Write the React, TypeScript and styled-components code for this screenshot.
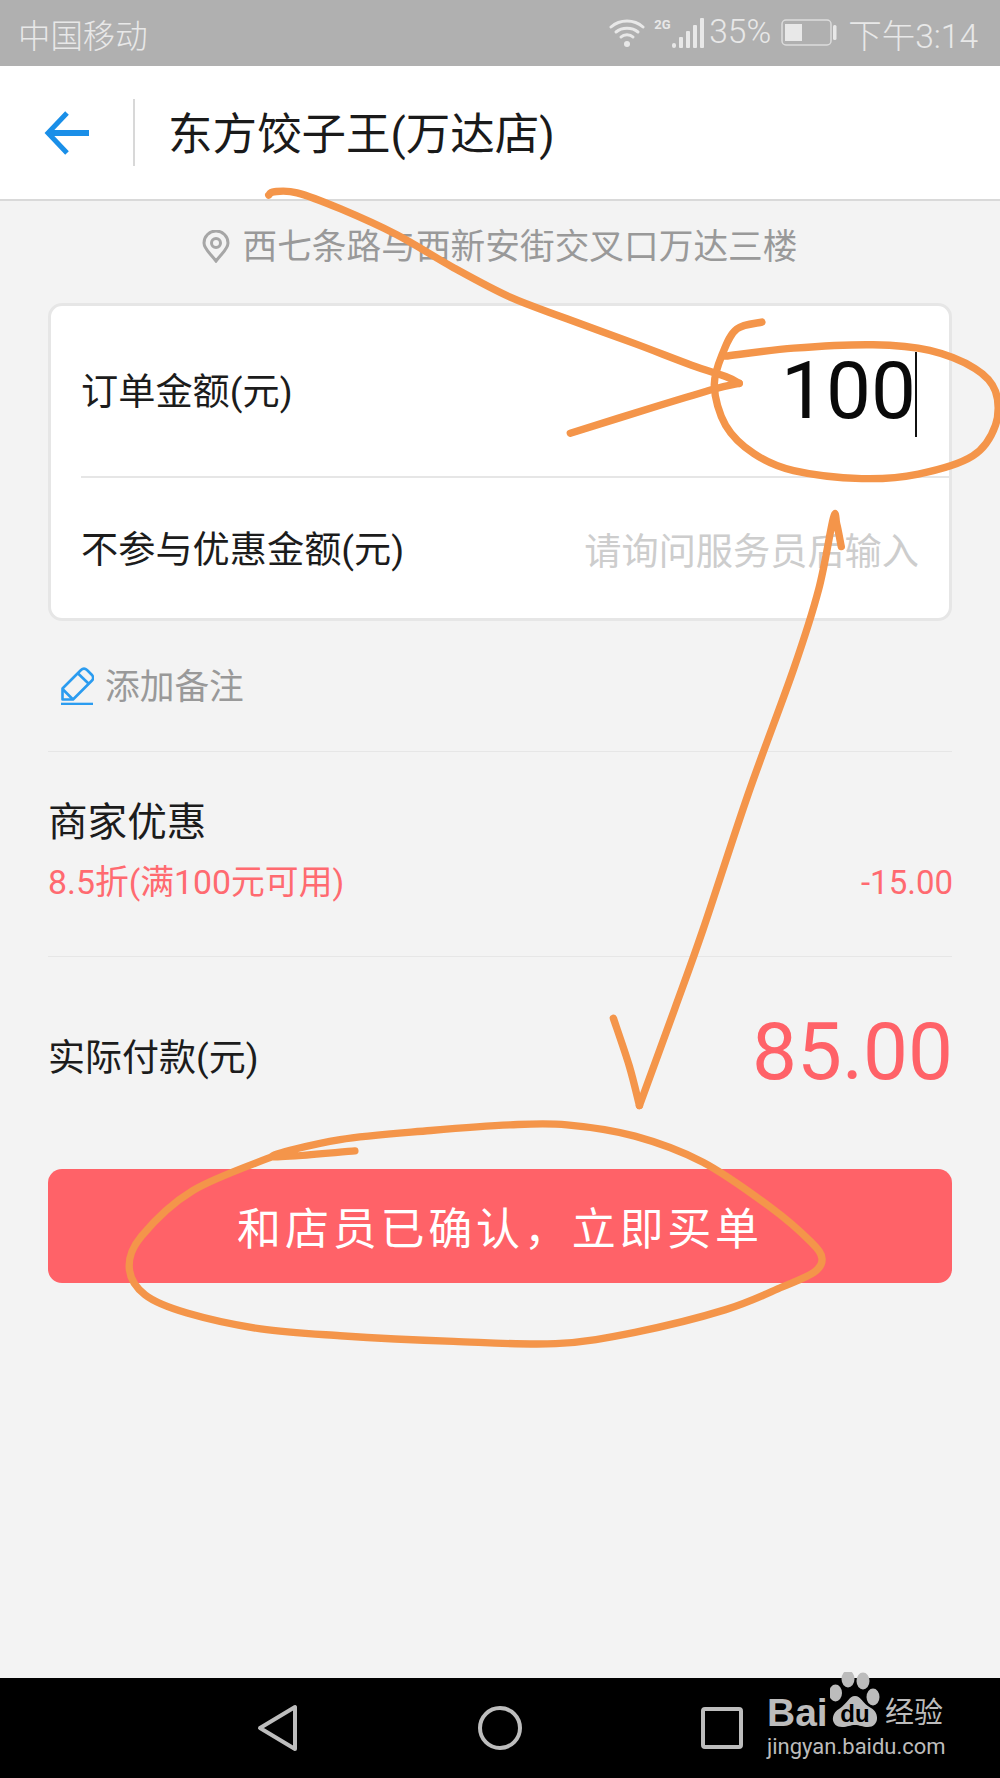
import React from "react";
import styled, { createGlobalStyle } from "styled-components";

const Global = createGlobalStyle`
  html, body { margin: 0; padding: 0; background: #f2f2f2; }
  * { box-sizing: border-box; }
`;

const Page = styled.div`
  position: relative;
  width: 1000px;
  height: 1778px;
  display: flex;
  flex-direction: column;
  overflow: hidden;
  background: #f3f3f3;
  font-family: Roboto, "Noto Sans CJK SC", sans-serif;
  color: #1c1c1c;
`;

const StatusBar = styled.div`
  height: 66px;
  flex: none;
  background: #b0b0b0;
  color: #e8e8e8;
  font-size: 33.5px;
  display: flex;
  align-items: center;
  justify-content: space-between;
  padding: 0 22px 0 18px;
  font-weight: 300;
`;

const Carrier = styled.span`
  font-size: 32.4px;
`;

const StatusRight = styled.div`
  display: flex;
  align-items: center;
`;

const Net = styled.span`
  font-size: 13px;
  font-weight: 700;
  margin: -18px 0 0 9px;
  width: 18px;
`;

const Percent = styled.span`
  margin-left: 5px;
  margin-top: -3px;
`;

const Clock = styled.span`
  margin-left: 11px;
`;

const Header = styled.header`
  height: 135px;
  flex: none;
  background: #fff;
  border-bottom: 2px solid #d9d9d9;
  display: flex;
  align-items: center;
  padding-left: 44px;
`;

const Separator = styled.div`
  width: 2px;
  height: 67px;
  background: #d8d8d8;
  margin: 0 33px 0 43px;
`;

const Title = styled.h1`
  margin: 4px 0 0 0;
  font-size: 44.5px;
  font-weight: 400;
  line-height: 60px;
  color: #1a1a1a;
`;

const Address = styled.div`
  height: 102px;
  flex: none;
  display: flex;
  align-items: center;
  justify-content: center;
  gap: 12px;
  padding-bottom: 12px;
  font-size: 34.7px;
  color: #999;
`;

const AddressText = styled.span`
  margin-bottom: 4px;
`;

const Card = styled.section`
  margin: 0 48px;
  height: 318px;
  flex: none;
  background: #fff;
  border: 3px solid #e6e6e6;
  border-radius: 14px;
  display: flex;
  flex-direction: column;
`;

const CardRow = styled.div<{ $first?: boolean }>`
  flex: ${(p) => (p.$first ? "0 0 172px" : "1")};
  margin-left: 30px;
  padding-right: 30px;
  display: flex;
  align-items: center;
  justify-content: space-between;
  font-size: 37.2px;
  border-bottom: ${(p) => (p.$first ? "2px solid #e6e6e6" : "none")};
`;

const RowLabel = styled.span<{ $lift: number }>`
  margin-bottom: ${(p) => p.$lift}px;
`;

const AmountWrap = styled.div`
  display: flex;
  align-items: center;
  margin-right: 2px;
`;

const Amount = styled.span`
  font-size: 80px;
  line-height: 86px;
  color: #0a0a0a;
  margin-top: -1px;
`;

const Cursor = styled.span`
  width: 2px;
  height: 85px;
  background: #111;
  margin: 6px 0 0 -1px;
`;

const Placeholder = styled.span`
  color: #cdcdcd;
  margin-top: 2px;
`;

const Note = styled.div`
  height: 130px;
  flex: none;
  margin-left: 61px;
  display: flex;
  align-items: center;
  gap: 11px;
  font-size: 34.7px;
  color: #999;
`;

const NoteText = styled.span`
  margin-bottom: 4px;
`;

const Offer = styled.section`
  margin: 0 48px;
  height: 206px;
  flex: none;
  border-top: 1px solid #e6e6e6;
  border-bottom: 1px solid #e6e6e6;
  padding-top: 46px;
`;

const OfferTitle = styled.div`
  font-size: 39.6px;
  line-height: 50px;
`;

const OfferLine = styled.div`
  margin-top: 15px;
  margin-right: -1px;
  display: flex;
  justify-content: space-between;
  font-size: 33px;
  line-height: 40px;
  color: #ff6a70;
`;

const OfferRule = styled.span`
  font-size: 33.8px;
`;

const Pay = styled.div`
  margin: 0 48px;
  height: 212px;
  flex: none;
  display: flex;
  align-items: center;
  justify-content: space-between;
  padding-bottom: 16px;
  font-size: 37px;
`;

const Price = styled.span`
  font-size: 80px;
  line-height: 90px;
  color: #ff6268;
  margin-bottom: 7px;
  margin-right: -1px;
`;

const PayButton = styled.button`
  margin: 0 48px;
  height: 114px;
  flex: none;
  border: 0;
  border-radius: 14px;
  background: #ff6268;
  color: #fff;
  font-family: inherit;
  font-size: 44px;
  letter-spacing: 3.8px;
  padding: 0;
`;

const Spacer = styled.div`
  flex: 1;
`;

const NavBar = styled.nav`
  height: 100px;
  flex: none;
  background: #000;
  display: flex;
  align-items: center;
  gap: 178px;
  padding-left: 256px;
`;

const Watermark = styled.div`
  position: absolute;
  left: 767px;
  top: 1672px;
  width: 182px;
  color: #bcbcbc;
  display: flex;
  flex-direction: column;
`;

const MarkTop = styled.div`
  display: flex;
  align-items: flex-end;
  height: 60px;
`;

const MarkBai = styled.span`
  font-family: "Liberation Sans", sans-serif;
  font-weight: 700;
  font-size: 39px;
  line-height: 42px;
  margin-bottom: -2px;
  width: 63px;
`;

const MarkJing = styled.span`
  font-size: 29px;
  line-height: 36px;
  margin: 0 0 1px 3px;
  white-space: nowrap;
`;

const MarkUrl = styled.span`
  font-size: 22px;
  line-height: 26px;
  margin-top: 2px;
  white-space: nowrap;
`;

const Overlay = styled.svg`
  position: absolute;
  left: 0;
  top: 0;
  width: 1000px;
  height: 1778px;
  pointer-events: none;
`;

type P = [number, number];

const smooth = (pts: P[]) => {
  let d = `M${pts[0][0]} ${pts[0][1]}`;
  for (let i = 0; i < pts.length - 1; i++) {
    const p0 = pts[Math.max(i - 1, 0)];
    const p1 = pts[i];
    const p2 = pts[i + 1];
    const p3 = pts[Math.min(i + 2, pts.length - 1)];
    const c1x = p1[0] + (p2[0] - p0[0]) / 6;
    const c1y = p1[1] + (p2[1] - p0[1]) / 6;
    const c2x = p2[0] - (p3[0] - p1[0]) / 6;
    const c2y = p2[1] - (p3[1] - p1[1]) / 6;
    d += ` C${c1x} ${c1y} ${c2x} ${c2y} ${p2[0]} ${p2[1]}`;
  }
  return d;
};

const strokes: P[][] = [
  [[237, 172], [242, 169], [262, 170], [300, 184], [350, 207], [400, 236], [450, 262], [500, 281], [560, 303], [610, 322], [640, 332], [652, 338]],
  [[652, 338], [630, 343], [580, 358], [503, 382]],
  [[672, 284], [650, 290], [638, 310], [630, 340], [640, 375], [665, 400], [700, 415], [760, 422], [810, 418], [858, 402], [878, 375], [878, 345], [860, 325], [820, 309], [770, 304], [700, 307], [640, 314]],
  [[742, 482], [738, 462], [735, 457], [722, 520], [700, 590], [660, 700], [620, 820], [595, 890], [564, 975]],
  [[564, 975], [555, 940], [541, 898]],
  [[313, 1015], [240, 1020], [300, 1005], [380, 997], [450, 992], [500, 992], [560, 1002], [620, 1025], [680, 1065], [715, 1095], [725, 1110], [718, 1122], [690, 1135], [640, 1155], [560, 1175], [490, 1185], [400, 1183], [300, 1178], [230, 1172], [165, 1158], [128, 1142], [114, 1118], [125, 1090], [170, 1050], [240, 1020]],
];

const Wifi = () => (
  <svg width="36" height="30" viewBox="0 0 36 30" fill="none" stroke="#e8e8e8" strokeWidth="3" strokeLinecap="round">
    <path d="M2 9C11 1 25 1 34 9" />
    <path d="M7 14C13 9 23 9 29 14" />
    <path d="M12 19C15 16 21 16 24 19" />
    <circle cx="18" cy="26" r="3" fill="#e8e8e8" stroke="none" />
  </svg>
);

const Signal = () => (
  <svg width="32" height="30" viewBox="0 0 32 30" fill="#e8e8e8">
    <rect x="0" y="25" width="4" height="5" rx="2" />
    <rect x="7" y="19" width="4" height="11" rx="1" />
    <rect x="14" y="13" width="4" height="17" rx="1" />
    <rect x="21" y="7" width="4" height="23" rx="1" />
    <rect x="28" y="0" width="4" height="30" rx="1" />
  </svg>
);

const BatteryIcon = styled.svg`
  margin-left: 10px;
`;

const Battery = () => (
  <BatteryIcon width="56" height="28" viewBox="0 0 56 28" fill="none">
    <rect x="1" y="1" width="49" height="25" rx="4" stroke="#dcdcdc" strokeWidth="1.5" />
    <rect x="4" y="5" width="17" height="17" fill="#e8e8e8" />
    <rect x="52" y="6" width="3.5" height="15" rx="1.5" fill="#e8e8e8" />
  </BatteryIcon>
);

const BackArrow = () => (
  <svg width="46" height="44" viewBox="0 0 46 44" fill="none" stroke="#1a8fe8" strokeWidth="5">
    <path d="M23 2L4 22L23 42" />
    <path d="M5 22H45" strokeWidth="6" />
  </svg>
);

const Pin = () => (
  <svg width="28" height="33" viewBox="0 0 28 33" fill="none" stroke="#a6a6a6" strokeWidth="3">
    <path d="M14 31C8 23 2 19 2 13a12 12 0 0 1 24 0C26 19 20 23 14 31Z" />
    <circle cx="14" cy="13" r="4.5" />
  </svg>
);

const Pencil = () => (
  <svg width="33" height="38" viewBox="0 0 33 38" fill="none" stroke="#2b9cf0" strokeWidth="2.6" strokeLinejoin="round">
    <path d="M1.5 32.5V21.5L20 3C22 1 24 1 26 3L31 8C32.5 10 32.5 12 31 13.5L12 32.5Z" />
    <path d="M16.5 6L28 17" />
    <path d="M2 22.5L11.5 32" />
    <path d="M0 37H32" strokeWidth="2.6" />
  </svg>
);

const NavBack = () => (
  <svg width="44" height="48" viewBox="0 0 44 48" fill="none" stroke="#bdbdbd" strokeWidth="4" strokeLinejoin="round">
    <path d="M39 3V45L4 24Z" />
  </svg>
);

const NavHome = () => (
  <svg width="44" height="48" viewBox="0 0 44 48" fill="none" stroke="#bdbdbd" strokeWidth="4">
    <circle cx="22" cy="24" r="20" />
  </svg>
);

const NavRecent = () => (
  <svg width="44" height="48" viewBox="0 0 44 48" fill="none" stroke="#bdbdbd" strokeWidth="4" strokeLinejoin="round">
    <rect x="3" y="5" width="38" height="38" rx="2" />
  </svg>
);

const Paw = () => (
  <svg width="52" height="60" viewBox="0 0 52 60" fill="#bcbcbc">
    <ellipse cx="18" cy="7" rx="6.5" ry="8.5" />
    <ellipse cx="33" cy="9" rx="6.5" ry="8.5" />
    <ellipse cx="5.5" cy="21" rx="6.5" ry="8.5" />
    <ellipse cx="43" cy="25" rx="6.5" ry="8.5" />
    <path d="M25 24C31 24 33 32 41 36C50 41 49 55 38 55C32 55 30 53 25 53C20 53 18 55 12 55C1 55 0 42 9 37C17 32 19 24 25 24Z" />
    <text x="25" y="50" textAnchor="middle" fontFamily="Liberation Sans, sans-serif" fontWeight="700" fontSize="24" fill="#000">du</text>
  </svg>
);

export default function App() {
  return (
    <Page>
      <Global />
      <StatusBar>
        <Carrier>中国移动</Carrier>
        <StatusRight>
          <Wifi />
          <Net>2G</Net>
          <Signal />
          <Percent>35%</Percent>
          <Battery />
          <Clock>下午3:14</Clock>
        </StatusRight>
      </StatusBar>
      <Header>
        <BackArrow />
        <Separator />
        <Title>东方饺子王(万达店)</Title>
      </Header>
      <Address>
        <Pin />
        <AddressText>西七条路与西新安街交叉口万达三楼</AddressText>
      </Address>
      <Card>
        <CardRow $first>
          <RowLabel $lift={4}>订单金额(元)</RowLabel>
          <AmountWrap>
            <Amount>100</Amount>
            <Cursor />
          </AmountWrap>
        </CardRow>
        <CardRow>
          <RowLabel $lift={2}>不参与优惠金额(元)</RowLabel>
          <Placeholder>请询问服务员后输入</Placeholder>
        </CardRow>
      </Card>
      <Note>
        <Pencil />
        <NoteText>添加备注</NoteText>
      </Note>
      <Offer>
        <OfferTitle>商家优惠</OfferTitle>
        <OfferLine>
          <OfferRule>8.5折(满100元可用)</OfferRule>
          <span>-15.00</span>
        </OfferLine>
      </Offer>
      <Pay>
        <span>实际付款(元)</span>
        <Price>85.00</Price>
      </Pay>
      <PayButton>{"和店员已确认\uFF0C立即买单"}</PayButton>
      <Spacer />
      <NavBar>
        <NavBack />
        <NavHome />
        <NavRecent />
      </NavBar>
      <Overlay viewBox="0 0 882 1568" fill="none" stroke="#f4954a" strokeWidth="6.5" strokeLinecap="round" strokeLinejoin="round">
        {strokes.map((s, i) => (
          <path key={i} d={smooth(s)} />
        ))}
      </Overlay>
      <Watermark>
        <MarkTop>
          <MarkBai>Bai</MarkBai>
          <Paw />
          <MarkJing>经验</MarkJing>
        </MarkTop>
        <MarkUrl>jingyan.baidu.com</MarkUrl>
      </Watermark>
    </Page>
  );
}
